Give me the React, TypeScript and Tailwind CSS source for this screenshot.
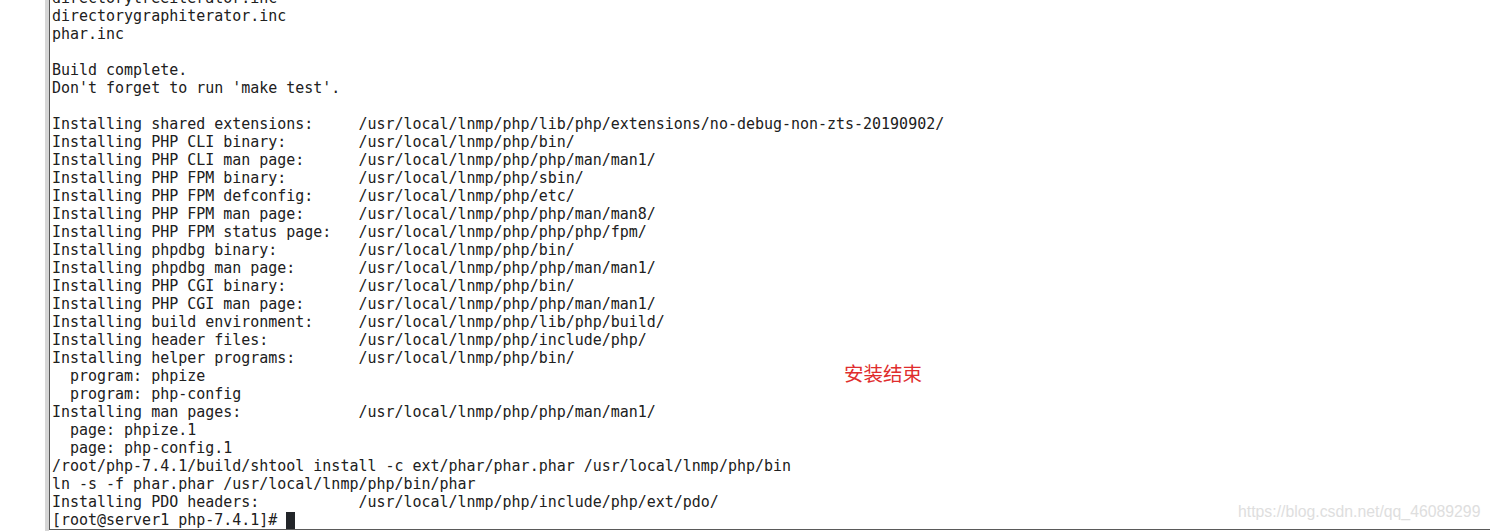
const lines: string[] = [
  'directorytreeiterator.inc',
  'directorygraphiterator.inc',
  'phar.inc',
  '',
  'Build complete.',
  "Don't forget to run 'make test'.",
  '',
  'Installing shared extensions:     /usr/local/lnmp/php/lib/php/extensions/no-debug-non-zts-20190902/',
  'Installing PHP CLI binary:        /usr/local/lnmp/php/bin/',
  'Installing PHP CLI man page:      /usr/local/lnmp/php/php/man/man1/',
  'Installing PHP FPM binary:        /usr/local/lnmp/php/sbin/',
  'Installing PHP FPM defconfig:     /usr/local/lnmp/php/etc/',
  'Installing PHP FPM man page:      /usr/local/lnmp/php/php/man/man8/',
  'Installing PHP FPM status page:   /usr/local/lnmp/php/php/php/fpm/',
  'Installing phpdbg binary:         /usr/local/lnmp/php/bin/',
  'Installing phpdbg man page:       /usr/local/lnmp/php/php/man/man1/',
  'Installing PHP CGI binary:        /usr/local/lnmp/php/bin/',
  'Installing PHP CGI man page:      /usr/local/lnmp/php/php/man/man1/',
  'Installing build environment:     /usr/local/lnmp/php/lib/php/build/',
  'Installing header files:          /usr/local/lnmp/php/include/php/',
  'Installing helper programs:       /usr/local/lnmp/php/bin/',
  '  program: phpize',
  '  program: php-config',
  'Installing man pages:             /usr/local/lnmp/php/php/man/man1/',
  '  page: phpize.1',
  '  page: php-config.1',
  '/root/php-7.4.1/build/shtool install -c ext/phar/phar.phar /usr/local/lnmp/php/bin',
  'ln -s -f phar.phar /usr/local/lnmp/php/bin/phar',
  'Installing PDO headers:           /usr/local/lnmp/php/include/php/ext/pdo/',
];

export default function App() {
  return (
    <div className="relative flex w-[1490px] h-[531px] overflow-hidden bg-white">
      <div className="w-[45px] shrink-0" />
      <div className="w-[4px] shrink-0 bg-[#d6d6d6]" />
      <div className="flex-1 h-[531px] pb-[1px]">
        <div className="flex h-[530px] flex-col justify-end overflow-hidden border-l border-b border-[#5a5a5a] pl-[2px] font-['DejaVu_Sans_Mono',monospace] text-[14.97px] leading-[18px] text-[#202020] whitespace-pre">
          {lines.map((line, i) => (
            <div key={i} className="h-[18px] shrink-0">
              {line}
            </div>
          ))}
          <div className="flex h-[18px] shrink-0 items-center">
            <span>[root@server1 php-7.4.1]# </span>
            <span className="inline-block w-[9px] h-[17px] bg-[#222529]" />
          </div>
        </div>
      </div>

      <span className="absolute left-[844px] top-[361px] font-['Noto_Sans_CJK_SC',sans-serif] text-[19.5px] leading-[24px] text-[#e02d2d]">
        安装结束
      </span>
      <span className="absolute left-[1238px] top-[502px] font-['Liberation_Sans',sans-serif] text-[15.8px] leading-[20px] text-[#dedede]">
        https://blog.csdn.net/qq_46089299
      </span>
    </div>
  );
}
